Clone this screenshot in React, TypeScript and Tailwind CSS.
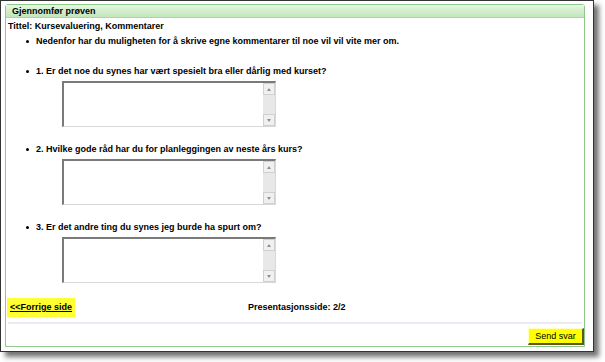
import React from 'react';

function FakeTextarea() {
  return (
    <div className="ml-[54px] mt-[2px] w-[214px] h-[46px] flex bg-white border-t-2 border-l-2 border-t-[#7a7a7a] border-l-[#7a7a7a] border-b border-r border-b-[#d8d8d8] border-r-[#d8d8d8]">
      <textarea className="flex-1 resize-none outline-none bg-white" />
      {/* scrollbar */}
      <div className="w-[12px] flex flex-col bg-[#e8e8e8]">
        <div className="h-[12px] flex items-center justify-center bg-[#f0f0f0] border border-[#d0d0d0]">
          <div className="w-0 h-0 border-l-[2px] border-r-[2px] border-b-[3px] border-l-transparent border-r-transparent border-b-[#909090]" />
        </div>
        <div className="flex-1" />
        <div className="h-[12px] flex items-center justify-center bg-[#f0f0f0] border border-[#d0d0d0]">
          <div className="w-0 h-0 border-l-[2px] border-r-[2px] border-t-[3px] border-l-transparent border-r-transparent border-t-[#909090]" />
        </div>
      </div>
    </div>
  );
}

function Bullet({ children }: { children: React.ReactNode }) {
  return (
    <div className="flex items-center h-[15px] pl-[18px]">
      <span className="w-[3px] h-[3px] rounded-full bg-black" />
      <span className="ml-[7px]">{children}</span>
    </div>
  );
}

const questions = [
  '1. Er det noe du synes har vært spesielt bra eller dårlig med kurset?',
  '2. Hvilke gode råd har du for planleggingen av neste års kurs?',
  '3. Er det andre ting du synes jeg burde ha spurt om?',
];

export default function App() {
  return (
    <div className="w-[605px] h-[362px] bg-white text-black text-[9px] leading-[15px] font-['Liberation_Sans',Arial,sans-serif]">
      <div className="w-[594px] h-[352px] bg-white border border-[#333] shadow-[5px_5px_5px_rgba(0,0,0,0.55)] pl-[4px] pt-[3px] pr-[8px] pb-[4px]">
        <div className="h-full flex flex-col border border-[#8fc98c] rounded-t-[3px]">
          {/* Header */}
          <div className="h-[13px] flex items-center pl-[6px] font-bold bg-gradient-to-b from-[#e6f6e2] to-[#c2e6b9] border-b border-[#a8d8a2]">
            Gjennomfør prøven
          </div>

          {/* Body */}
          <div className="flex-1 flex flex-col pl-[2px] pt-[1px] font-bold">
            <div className="h-[15px]">Tittel: Kursevaluering, Kommentarer</div>
            <Bullet>Nedenfor har du muligheten for å skrive egne kommentarer til noe vil vil vite mer om.</Bullet>
            <div className="h-[15px]" />
            {questions.map((q) => (
              <div key={q} className="mb-[15px]">
                <Bullet>{q}</Bullet>
                <FakeTextarea />
              </div>
            ))}

            {/* Footer row */}
            <div className="flex items-center h-[19px] -ml-[1px]">
              <a href="#" className="bg-[#ffff33] h-[19px] px-[3px] flex items-center underline">
                &lt;&lt;Forrige side
              </a>
              <span className="ml-[173px]">Presentasjonsside: 2/2</span>
            </div>
            <div className="mt-[5px] mr-[2px] h-[2px] bg-[#ebebf4]" />
            <div className="flex justify-end mt-[4px]">
              <button className="w-[56px] h-[17px] bg-[#ffff00] font-normal border-t border-l border-t-[#ffffc0] border-l-[#ffffc0] border-r-2 border-b-2 border-r-[#5a5a20] border-b-[#5a5a20] leading-none">
                Send svar
              </button>
            </div>
          </div>
        </div>
      </div>
    </div>
  );
}
